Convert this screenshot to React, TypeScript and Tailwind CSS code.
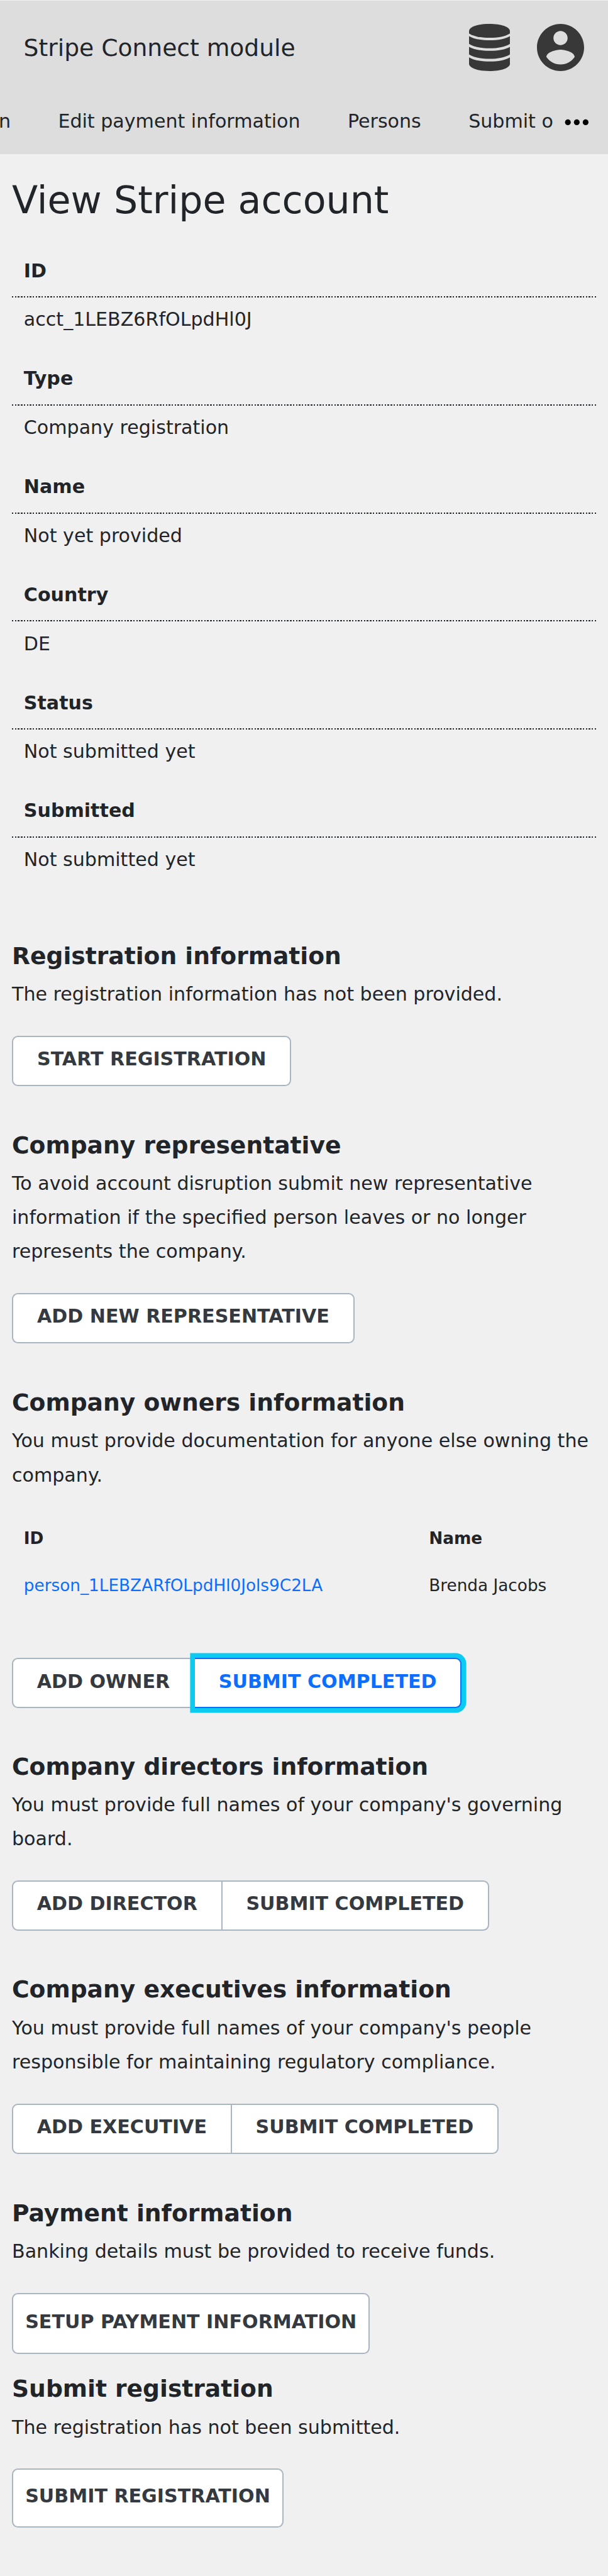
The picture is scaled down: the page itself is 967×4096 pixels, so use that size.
import type { ReactNode } from "react";

const details = [
  ["ID", "acct_1LEBZ6RfOLpdHl0J"],
  ["Type", "Company registration"],
  ["Name", "Not yet provided"],
  ["Country", "DE"],
  ["Status", "Not submitted yet"],
  ["Submitted", "Not submitted yet"],
];

function DatabaseIcon() {
  return (
    <svg className="h-[75px] w-[65px]" viewBox="0 0 290 336" fill="#383838" preserveAspectRatio="none">
      <path d="M0 52C0 20 64 0 145 0S290 20 290 52V68C260 88 205 99 145 99S30 88 0 68Z" />
      <path d="M0 87C30 106 85 117 145 117S260 106 290 87V142C260 163 205 174 145 174S30 163 0 142Z" />
      <path d="M0 163C30 182 85 192 145 192S260 182 290 163V217C260 238 205 249 145 249S30 238 0 217Z" />
      <path d="M0 238C30 257 85 268 145 268S260 257 290 238V288C284 316 225 336 145 336S6 316 0 288Z" />
    </svg>
  );
}

function AccountIcon() {
  return (
    <svg className="h-[75px] w-[75px]" viewBox="2 2 20 20" fill="#383838">
      <path d="M12 2C6.48 2 2 6.48 2 12s4.480 10 10 10 10-4.480 10-10S17.520 2 12 2zm0 3c1.660 0 3 1.340 3 3s-1.340 3-3 3-3-1.340-3-3 1.340-3 3-3zm0 14.200c-2.500 0-4.710-1.280-6-3.220.030-1.990 4-3.080 6-3.080 1.990 0 5.970 1.090 6 3.080-1.290 1.940-3.500 3.220-6 3.220z" />
    </svg>
  );
}

function Header() {
  return (
    <header className="mt-px h-[244px] overflow-hidden bg-[#dddddd]">
      <div className="flex h-[149px] items-center pl-[37.6px] pr-[38px]">
        <h1 className="grow text-[37.63px] leading-[54px]">Stripe Connect module</h1>
        <DatabaseIcon />
        <div className="w-[43px]" />
        <AccountIcon />
      </div>
      <nav className="flex h-[86px] items-center whitespace-nowrap leading-[54px]">
        <div className="flex w-[885px] gap-[75.4px] overflow-hidden">
          <span className="flex w-[17px] shrink-0 justify-end">Edit registration</span>
          <span>Edit payment information</span>
          <span>Persons</span>
          <span>Submit o</span>
        </div>
        <svg className="ml-[13px] h-[12px] w-[38px]" viewBox="0 0 38 12">
          <circle cx="5.2" cy="7.4" r="4.6" />
          <circle cx="19.3" cy="7.4" r="4.6" />
          <circle cx="33.4" cy="7.4" r="4.6" />
        </svg>
      </nav>
    </header>
  );
}

function Section({ title, text, className, children }: { title: string; text: string; className: string; children: ReactNode }) {
  return (
    <section className={className}>
      <h3 className="text-[37.63px] font-bold leading-[54px]">{title}</h3>
      <p className="mb-[38.7px] mt-[7.2px]">{text}</p>
      {children}
    </section>
  );
}

const base = "border-[#a9b5c1] bg-white font-bold uppercase whitespace-nowrap text-[#343a40]";

function Single({ children }: { children: string }) {
  return <button className={`${base} block h-[80px] rounded-[9.4px] border-2 px-[38px] pb-[5px]`}>{children}</button>;
}

function Large({ children, className }: { children: string; className: string }) {
  return <button className={`${base} ${className} block rounded-[9.4px] border-2 px-[19.2px] pb-[6px]`}>{children}</button>;
}

function Pair({ first, active = false }: { first: string; active?: boolean }) {
  const state = active
    ? "relative border-[#0d6efd] bg-white text-[#0d6efd] shadow-[0_0_0_7.6px_#0dcaf0]"
    : "border-[#a9b5c1] bg-white text-[#343a40]";
  return (
    <div className="flex h-[80px]">
      <button className={`${base} rounded-l-[9.4px] border-2 px-[37.8px] pb-[5px]`}>{first}</button>
      <button className={`${state} whitespace-nowrap rounded-r-[9.4px] border-y-2 border-r-2 px-[37.8px] pb-[5px] font-bold uppercase`}>
        Submit completed
      </button>
    </div>
  );
}

export default function App() {
  return (
    <div className="flow-root h-[4096px] w-[967px] overflow-hidden bg-[#f0f0f0] font-['DejaVu_Sans',sans-serif] text-[30.106px] leading-[54.19px] text-[#212529]">
      <Header />
      <main className="px-[19px]">
        <h2 className="mt-[46px] h-[112px] text-[60.2px] leading-[54px]">View Stripe account</h2>
        <dl className="h-[1089.6px]">
          {details.map(([label, value]) => (
            <div key={label} className="h-[171.77px]">
              <dt className="h-[68px] px-[18.8px] pt-[0.6px] font-bold">{label}</dt>
              <dd className="bg-[repeating-linear-gradient(90deg,#212529_0_2.4px,transparent_2.4px_4.704px)] bg-[length:100%_2px] bg-no-repeat px-[18.8px] pt-[10.4px]">
                {value}
              </dd>
            </div>
          ))}
        </dl>
        <Section className="h-[301px]" title="Registration information" text="The registration information has not been provided.">
          <Single>Start registration</Single>
        </Section>
        <Section
          className="h-[409.7px]"
          title="Company representative"
          text="To avoid account disruption submit new representative information if the specified person leaves or no longer represents the company."
        >
          <Single>Add new representative</Single>
        </Section>
        <Section className="h-[578.4px]" title="Company owners information" text="You must provide documentation for anyone else owning the company.">
          <div className="mb-[91.1px] mt-[50.1px] grid grid-cols-[644.4px_1fr] gap-y-[27.4px] pl-[18.8px] text-[26.3px] leading-[47.4px]">
            <span className="font-bold">ID</span>
            <span className="font-bold">Name</span>
            <a className="text-[#0d6efd]">person_1LEBZARfOLpdHl0Jols9C2LA</a>
            <span>Brenda Jacobs</span>
          </div>
          <Pair first="Add owner" active />
        </Section>
        <Section className="h-[354.7px]" title="Company directors information" text="You must provide full names of your company's governing board.">
          <Pair first="Add director" />
        </Section>
        <Section
          className="h-[355.7px]"
          title="Company executives information"
          text="You must provide full names of your company's people responsible for maintaining regulatory compliance."
        >
          <Pair first="Add executive" />
        </Section>
        <Section className="h-[279.3px]" title="Payment information" text="Banking details must be provided to receive funds.">
          <Large className="h-[97px]">Setup payment information</Large>
        </Section>
        <Section className="h-[300px]" title="Submit registration" text="The registration has not been submitted.">
          <Large className="h-[94px]">Submit registration</Large>
        </Section>
      </main>
    </div>
  );
}
